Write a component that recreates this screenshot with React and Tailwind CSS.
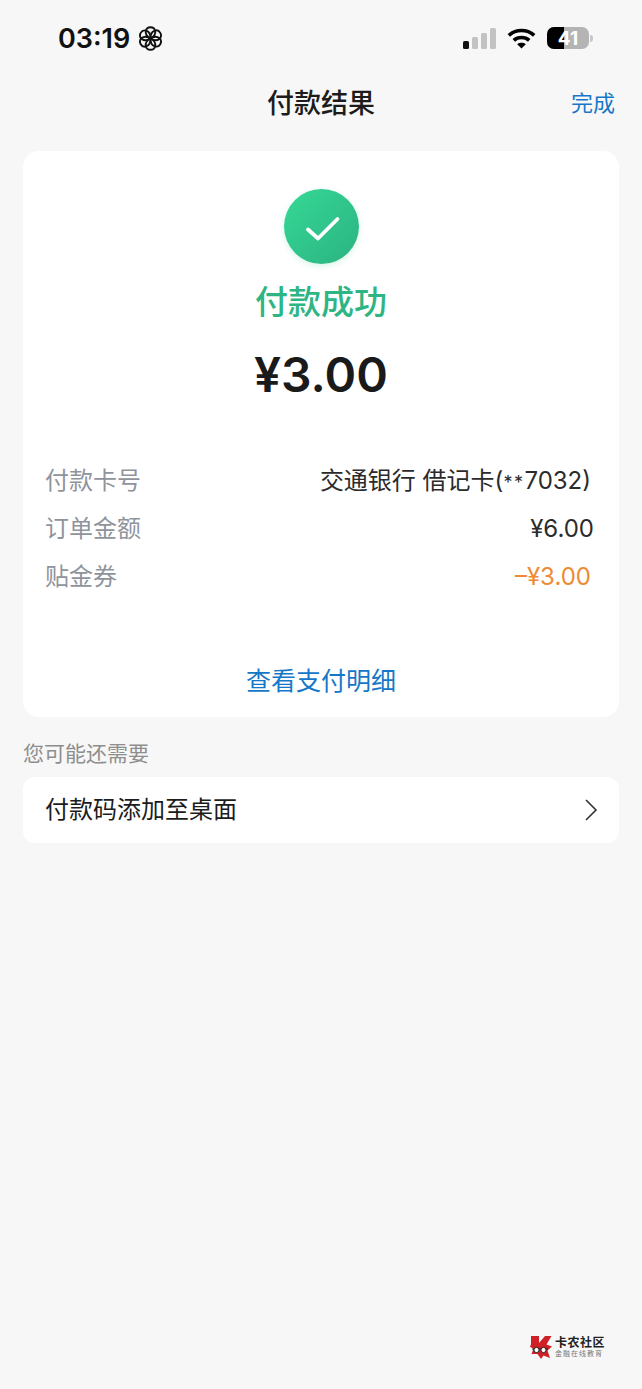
const font = { fontFamily: 'Inter, "Noto Sans CJK SC", sans-serif' };

function Flower() {
  const petals = [0, 60, 120, 180, 240, 300];
  return (
    <svg width="25" height="25" viewBox="0 0 25 25" fill="none" stroke="#111" strokeWidth="1.9">
      {petals.map((a) => (
        <g key={a} transform={`rotate(${a} 12.5 12.5)`}>
          <path d="M12.5 12.5C8.6 10.5 7.4 7.5 7.8 5.2C8.2 2.6 10.2 1.2 12.5 1.2C14.8 1.2 16.8 2.6 17.2 5.2C17.6 7.5 16.4 10.5 12.5 12.5Z" />
        </g>
      ))}
    </svg>
  );
}

function Signal() {
  return (
    <svg width="33" height="21" viewBox="0 0 33 21">
      <rect x="0" y="13" width="6" height="8" rx="1.5" fill="#111" />
      <rect x="9" y="9" width="6" height="12" rx="1.5" fill="#c2c2c2" />
      <rect x="18" y="5" width="6" height="16" rx="1.5" fill="#c2c2c2" />
      <rect x="27" y="0" width="6" height="21" rx="1.5" fill="#c2c2c2" />
    </svg>
  );
}

function Wifi() {
  return (
    <svg width="29" height="21" viewBox="0 0 29 21" fill="none" stroke="#000" strokeWidth="3.6">
      <path d="M1.8 7.4C9 .8 20 .8 27.2 7.4" />
      <path d="M6.8 12.4C11 8.6 18 8.6 22.2 12.4" />
      <path d="M14.5 20.6 L10.2 16.2C12.6 14.4 16.4 14.4 18.8 16.2Z" fill="#000" stroke="none" />
    </svg>
  );
}

function Battery() {
  return (
    <div className="flex items-center gap-[1px]">
      <div className="relative flex h-[22px] w-[42px] overflow-hidden rounded-[7px] bg-[#b4b4b4]">
        <div className="h-full w-[17px] bg-black" />
        <span className="absolute inset-0 flex items-center justify-center text-[19px] font-bold leading-none text-white">41</span>
      </div>
      <div className="h-[7px] w-[3px] rounded-r-full bg-[#c8c8c8]" />
    </div>
  );
}

function Row({ label, children, className = "" }) {
  return (
    <div className="flex h-[48px] items-center justify-between">
      <span className="text-[24px] leading-none text-[#8f949c]">{label}</span>
      <span className={`leading-none ${className}`}>{children}</span>
    </div>
  );
}

function Watermark() {
  return (
    <div className="absolute left-[530px] top-[1335px] flex items-center gap-[3px]">
      <svg width="22" height="25" viewBox="0 0 22 25">
        <path d="M1 1h8v7L15 1h6.5l-5 8.5 5.5 2-4.5 4 2.5 7.5-6.5-2.5L11 24l-3.5-5H1.5l2-5.5L0 12l1-3z" fill="#cf2027" />
        <path d="M2 14h16" stroke="#222" strokeWidth="1" />
        <circle cx="6.5" cy="15" r="2.6" fill="#fff" stroke="#222" strokeWidth="1" />
        <circle cx="13.5" cy="15" r="2.6" fill="#fff" stroke="#222" strokeWidth="1" />
      </svg>
      <div className="flex flex-col">
        <span className="text-[12px] font-bold leading-[13px] tracking-[0.5px] text-[#222]">卡农社区</span>
        <span className="text-[7px] leading-[10px] tracking-[1px] text-[#777]">金融在线教育</span>
      </div>
    </div>
  );
}

export default function App() {
  return (
    <div style={font} className="relative h-[1389px] w-[642px] overflow-hidden bg-[#f7f7f7] text-[#1c1c1c]">
      <div className="flex h-[76px] items-center justify-between pl-[58px] pr-[49px]">
        <div className="flex items-center gap-[8px]">
          <span className="text-[27px] font-semibold leading-none text-[#111]">03:19</span>
          <Flower />
        </div>
        <div className="flex items-center gap-[11px]">
          <Signal />
          <Wifi />
          <Battery />
        </div>
      </div>

      <div className="relative flex h-[54px] items-center justify-center">
        <span className="text-[27px] font-medium leading-none">付款结果</span>
        <span className="absolute right-[27px] text-[22px] leading-none text-[#1677c8]">完成</span>
      </div>

      <div className="mx-[23px] mt-[21px] flex h-[566px] flex-col rounded-[16px] bg-white px-[22px]">
        <div className="mt-[38px] flex justify-center">
          <div className="flex h-[75px] w-[75px] items-center justify-center rounded-full bg-gradient-to-br from-[#35d896] to-[#2bb381] shadow-[0_2px_6px_rgba(52,200,140,0.2)]">
            <svg className="ml-[3px] mt-[4px]" width="36" height="28" viewBox="0 0 36 28" fill="none" stroke="#fff" strokeWidth="3.8" strokeLinecap="round" strokeLinejoin="round">
              <path d="M3 14.5 L13 23.5 L32.5 4" />
            </svg>
          </div>
        </div>
        <div className="mt-[22px] text-center text-[33px] font-medium leading-none text-[#2fb583]">付款成功</div>
        <div className="mt-[32px] text-center text-[48px] font-semibold leading-none text-[#1a1a1a]">¥3.00</div>

        <div className="mt-[58px] text-[24px]">
          <Row label="付款卡号" className="pr-[6px] text-[24px] text-[#2b2b2b]">
            交通银行 借记卡(<span className="text-[18px] tracking-[1.5px]">**</span>7032)
          </Row>
          <Row label="订单金额" className="pr-[3px] text-[24px] text-[#2b2b2b]">¥6.00</Row>
          <Row label="贴金券" className="pr-[6px] text-[24px] text-[#ef8a33]">–¥3.00</Row>
        </div>

        <div className="mt-[68px] text-center text-[25px] leading-none text-[#1677c8]">查看支付明细</div>
      </div>

      <div className="mx-[23px] mt-[26px] text-[21px] leading-none text-[#8e8e8e]">您可能还需要</div>

      <div className="mx-[23px] mt-[13px] flex h-[66px] items-center justify-between rounded-[12px] bg-white pl-[22px] pr-[21px]">
        <span className="text-[24px] leading-none text-[#1c1c1c]">付款码添加至桌面</span>
        <svg width="14" height="24" viewBox="0 0 14 24" fill="none" stroke="#333" strokeWidth="1.6">
          <path d="M2 2 L12 12 L2 22" />
        </svg>
      </div>

      <Watermark />
    </div>
  );
}
